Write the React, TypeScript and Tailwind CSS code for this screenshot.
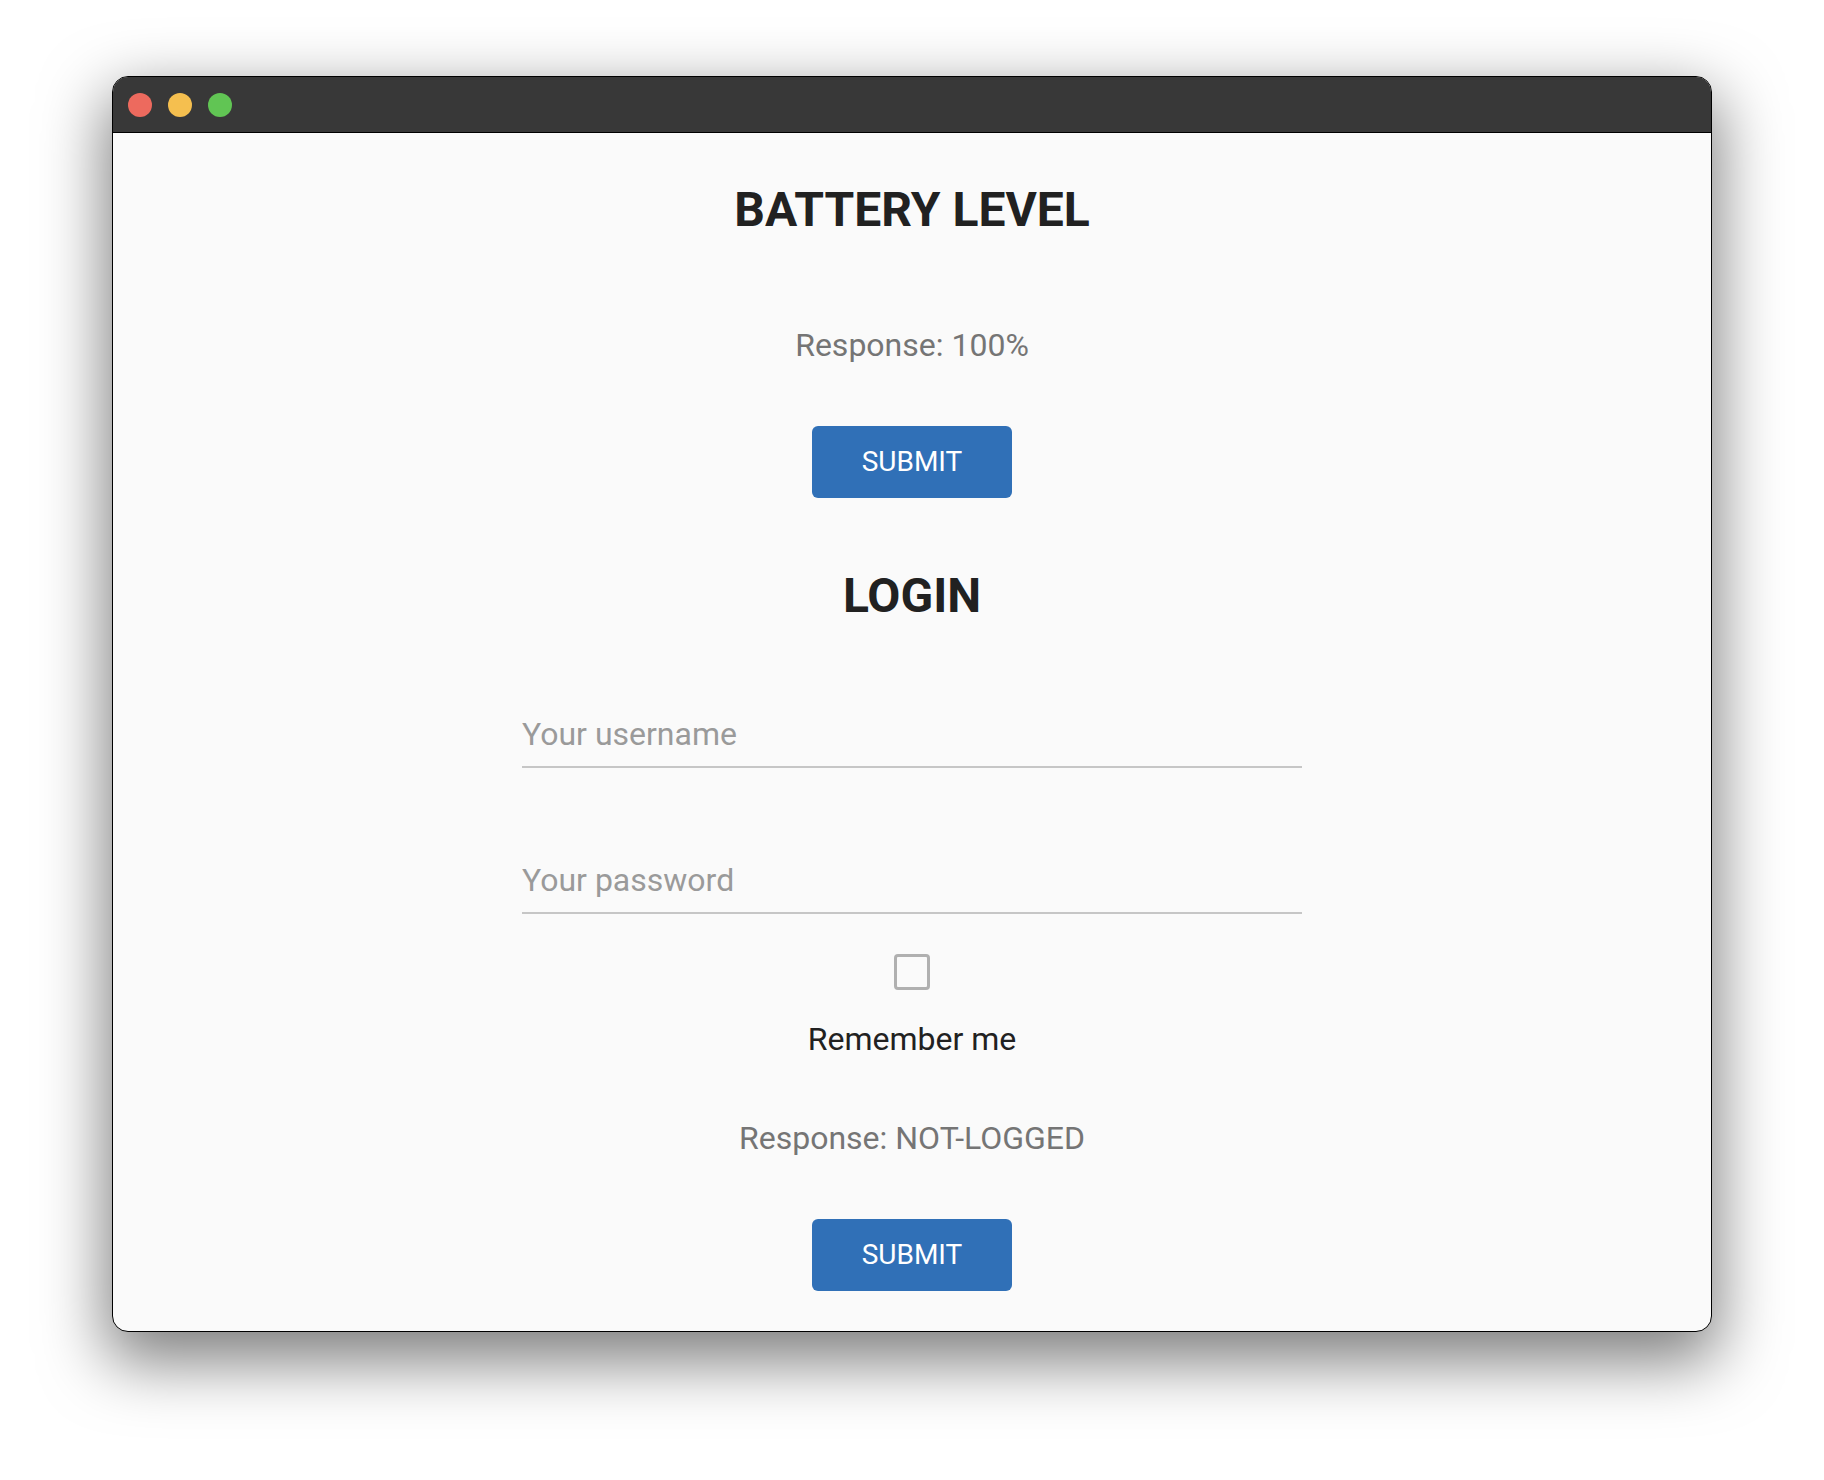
export default function App() {
  return (
    <div className="min-h-[1480px] w-full bg-white pt-[76px] px-[112px] pb-[148px] font-['Roboto',sans-serif]">
      <div className="h-[1256px] rounded-[16px] border border-black overflow-hidden flex flex-col bg-[#fafafa] shadow-[0_24px_64px_6px_rgba(0,0,0,0.5)]">
        <div className="h-[56px] shrink-0 bg-[#383838] border-b border-black flex items-center gap-4 pl-[15px]">
          <span className="w-6 h-6 rounded-full bg-[#ed6a5e]" />
          <span className="w-6 h-6 rounded-full bg-[#f5bf4f]" />
          <span className="w-6 h-6 rounded-full bg-[#61c554]" />
        </div>

        <div className="flex flex-col items-center pt-[49px]">
          <h1 className="text-[48px] leading-[56px] font-bold text-[#212121]">BATTERY LEVEL</h1>
          <p className="mt-[88px] text-[32px] leading-[38px] text-[#757575]">Response: 100%</p>
          <button className="mt-[62px] w-[200px] h-[72px] rounded-[6px] bg-[#3070b7] text-white text-[28px]">
            SUBMIT
          </button>

          <h1 className="mt-[70px] text-[48px] leading-[56px] font-bold text-[#212121]">LOGIN</h1>

          <input
            placeholder="Your username"
            className="mt-[91px] w-[780px] h-[53px] pb-[13px] text-[32px] leading-[38px] bg-transparent border-b-2 border-[#c6c6c6] outline-none placeholder:text-[#9a9a9a]"
          />
          <input
            type="password"
            placeholder="Your password"
            className="mt-[93px] w-[780px] h-[53px] pb-[13px] text-[32px] leading-[38px] bg-transparent border-b-2 border-[#c6c6c6] outline-none placeholder:text-[#9a9a9a]"
          />

          <div className="mt-[40px] w-[36px] h-[36px] rounded-[4px] border-[3.5px] border-[#b0b0b0]" />
          <p className="mt-[30px] text-[32px] leading-[38px] text-[#212121]">Remember me</p>

          <p className="mt-[61px] text-[32px] leading-[38px] text-[#757575]">Response: NOT-LOGGED</p>
          <button className="mt-[62px] w-[200px] h-[72px] rounded-[6px] bg-[#3070b7] text-white text-[28px]">
            SUBMIT
          </button>
        </div>
      </div>
    </div>
  );
}
